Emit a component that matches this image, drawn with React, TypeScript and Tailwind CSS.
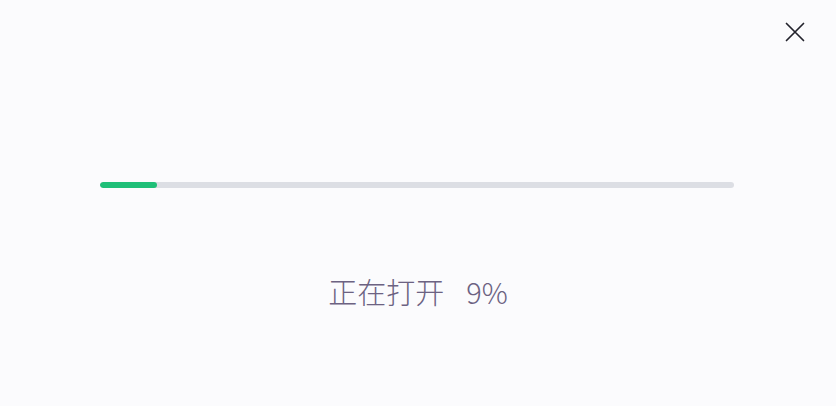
export default function App() {
  const percent = 9;
  return (
    <div className="w-[836px] h-[406px] bg-[#fbfbfd] flex flex-col relative overflow-hidden" style={{ fontFamily: '"Noto Sans CJK SC", "Noto Sans", sans-serif' }}>
      <button className="absolute right-[30px] top-[21px] w-[22px] h-[22px] flex items-center justify-center text-[#22222c]">
        <svg width="20" height="20" viewBox="0 0 20 20" fill="none" stroke="currentColor" strokeWidth="1.7" strokeLinecap="round">
          <path d="M1.5 1.5 L18.5 18.5 M18.5 1.5 L1.5 18.5" />
        </svg>
      </button>
      <div className="pt-[182px] px-[100px] pr-[102px]">
        <div className="h-[6px] rounded-full bg-[#dcdee4] overflow-hidden">
          <div className="h-full rounded-full bg-[#1fbf78]" style={{ width: `${percent}%` }} />
        </div>
      </div>
      <div className="mt-[89px] flex justify-center text-[29px] font-extralight text-[#6c6282] leading-none">
        <span>正在打开</span>
        <span className="ml-[22px]">{percent}%</span>
      </div>
    </div>
  );
}
